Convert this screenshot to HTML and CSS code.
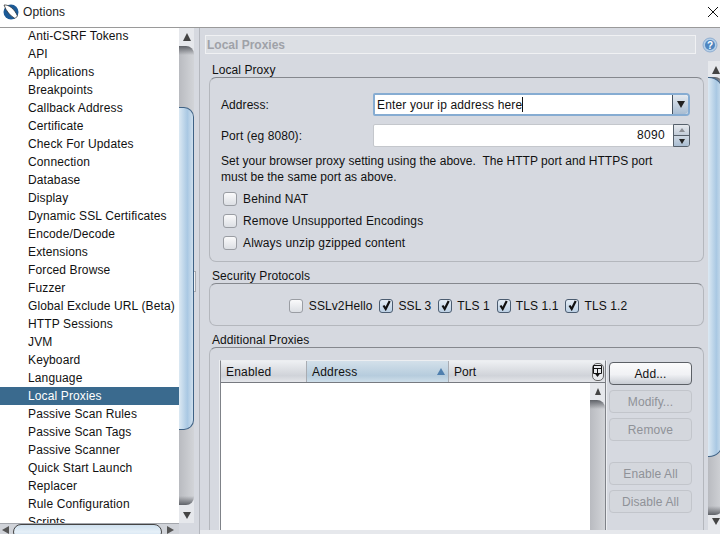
FILE: index.html
```html
<!DOCTYPE html>
<html lang="en">
<head>
<meta charset="utf-8">
<title>Options</title>
<link rel="stylesheet" href="styles.css">
</head>
<body>
<div class="window">
  <header class="titlebar">
    <svg class="logo" width="18" height="18" viewBox="0 0 18 18"><circle cx="9" cy="9" r="7.5" fill="#1c5a96"/><path d="M2 2C7 1.5 12.5 6 15.5 13 L13 15.5C8.5 13 4 8 2 2Z" fill="#fff" stroke="#222" stroke-width="0.7"/></svg>
    <span class="title">Options</span>
    <svg class="close" width="12" height="12" viewBox="0 0 12 12"><path d="M1 1L11 11M11 1L1 11" stroke="#111" stroke-width="1" fill="none"/></svg>
  </header>
  <main class="content">
    <nav class="tree">
      <div class="tree-main">
        <ul class="tree-list">
          <li>Anti-CSRF Tokens</li><li>API</li><li>Applications</li><li>Breakpoints</li><li>Callback Address</li><li>Certificate</li><li>Check For Updates</li><li>Connection</li><li>Database</li><li>Display</li><li>Dynamic SSL Certificates</li><li>Encode/Decode</li><li>Extensions</li><li>Forced Browse</li><li>Fuzzer</li><li>Global Exclude URL (Beta)</li><li>HTTP Sessions</li><li>JVM</li><li>Keyboard</li><li>Language</li><li class="selected">Local Proxies</li><li>Passive Scan Rules</li><li>Passive Scan Tags</li><li>Passive Scanner</li><li>Quick Start Launch</li><li>Replacer</li><li>Rule Configuration</li><li>Scripts</li>
        </ul>
        <div class="vscroll tree-vscroll">
          <span class="arrow up"></span>
          <div class="track"><div class="thumb tree-thumb"></div></div>
          <span class="arrow down"></span>
        </div>
      </div>
      <div class="hscroll-row">
        <div class="hscroll">
          <span class="arrow left"></span>
          <div class="htrack"><div class="hthumb"></div></div>
          <span class="arrow right"></span>
        </div>
      </div>
    </nav>
    <div class="divider"><span class="grip"></span></div>
    <section class="panel">
      <div class="panel-head">
        <div class="panel-title">Local Proxies</div>
        <svg class="help" width="16" height="16" viewBox="0 0 16 16"><circle cx="8" cy="8" r="7" fill="#b5cfe8" stroke="#8fadd0"/><circle cx="8" cy="8" r="5" fill="#4f86c0"/><text x="8" y="11.5" text-anchor="middle" class="help-q">?</text></svg>
      </div>
      <div class="panel-body">
        <div class="forms">
          <h2 class="group-label first">Local Proxy</h2>
          <div class="group proxy-group">
            <div class="form-row addr-row">
              <label class="form-label">Address:</label>
              <div class="combo"><span class="combo-text">Enter your ip address here</span><span class="combo-btn"><span class="arrow down dark"></span></span></div>
            </div>
            <div class="form-row port-row">
              <label class="form-label">Port (eg 8080):</label>
              <div class="spinner"><span class="spin-value">8090</span><span class="spin-btns"><span class="spin-btn"><span class="arrow up tiny grey"></span></span><span class="spin-btn"><span class="arrow down tiny dark"></span></span></span></div>
            </div>
            <p class="note">Set your browser proxy setting using the above.&nbsp; The HTTP port and HTTPS port<br>must be the same port as above.</p>
            <div class="checks">
              <label class="check"><span class="box"></span>Behind NAT</label>
              <label class="check"><span class="box"></span>Remove Unsupported Encodings</label>
              <label class="check"><span class="box"></span>Always unzip gzipped content</label>
            </div>
          </div>
          <h2 class="group-label">Security Protocols</h2>
          <div class="group protocols">
            <label class="check"><span class="box"></span>SSLv2Hello</label>
            <label class="check"><span class="box on"><svg width="11" height="11" viewBox="0 0 11 11"><path d="M2.5 5.5L4.7 9L8.7 1" stroke="#111" stroke-width="2.2" fill="none"/></svg></span>SSL 3</label>
            <label class="check"><span class="box on"><svg width="11" height="11" viewBox="0 0 11 11"><path d="M2.5 5.5L4.7 9L8.7 1" stroke="#111" stroke-width="2.2" fill="none"/></svg></span>TLS 1</label>
            <label class="check"><span class="box on"><svg width="11" height="11" viewBox="0 0 11 11"><path d="M2.5 5.5L4.7 9L8.7 1" stroke="#111" stroke-width="2.2" fill="none"/></svg></span>TLS 1.1</label>
            <label class="check"><span class="box on"><svg width="11" height="11" viewBox="0 0 11 11"><path d="M2.5 5.5L4.7 9L8.7 1" stroke="#111" stroke-width="2.2" fill="none"/></svg></span>TLS 1.2</label>
          </div>
          <h2 class="group-label">Additional Proxies</h2>
          <div class="group additional">
            <div class="table">
              <div class="thead">
                <div class="th th-enabled">Enabled</div>
                <div class="th th-address">Address<span class="sort"></span></div>
                <div class="th th-port">Port</div>
                <div class="th-cell"><div class="th-corner"><svg width="9" height="13" viewBox="0 0 9 13"><path d="M.5 .5H8.5V8.5H.5ZM.5 3.5H8.5M4.5 3.5V8.5" stroke="#111" fill="none"/><path d="M1.5 8H7.5L4.5 12Z" fill="#111"/></svg></div></div>
              </div>
              <div class="tbody">
                <div class="rows"></div>
                <div class="vscroll table-vscroll">
                  <span class="arrow up"></span>
                  <div class="track"></div>
                </div>
              </div>
            </div>
            <div class="buttons">
              <button class="btn primary">Add...</button>
              <button class="btn">Modify...</button>
              <button class="btn">Remove</button>
              <button class="btn spaced">Enable All</button>
              <button class="btn">Disable All</button>
            </div>
          </div>
        </div>
        <div class="vscroll main-vscroll">
          <span class="arrow up"></span>
          <div class="track"><div class="thumb main-thumb"></div></div>
          <span class="arrow down"></span>
        </div>
      </div>
      <div class="footer"></div>
    </section>
  </main>
</div>
</body>
</html>
```
FILE: styles.css
```css
* { box-sizing: border-box; }
html, body { margin: 0; padding: 0; }
body { width: 720px; height: 534px; overflow: hidden; font-family: "Liberation Sans", Arial, sans-serif; font-size: 12px; color: #111; background: #d6d9e0; }
.window { width: 720px; height: 534px; display: flex; flex-direction: column; overflow: hidden; }
.titlebar { height: 28px; flex: none; background: #fff; border-bottom: 1px solid #9a9a9a; display: flex; align-items: center; padding: 0 1px 4px 2px; }
.logo { flex: none; }
.title { margin-left: 3px; flex: 1; color: #222; letter-spacing: .1px; }
.close { flex: none; }
.content { flex: 1; min-height: 0; display: flex; overflow: hidden; }
.footer { height: 4px; flex: none; background: #e6e8ec; }
.tree { width: 194px; flex: none; display: flex; flex-direction: column; background: #d6d9e0; min-height: 0; }
.tree-main { flex: 1; min-height: 0; display: flex; }
.tree-list { list-style: none; margin: 0; padding: 0; flex: 1; overflow: hidden; background: #fff; }
.tree-list li { height: 18px; line-height: 18px; padding-left: 28px; letter-spacing: .13px; white-space: nowrap; }
.tree-list li:first-child { margin-top: -1px; }
.tree-list li.selected { background: #3a6a8e; color: #fff; }
.vscroll { display: flex; flex-direction: column; align-items: center; background: #e6e8ec; flex: none; }
.tree-vscroll { width: 15px; }
.track { flex: 1; width: 100%; position: relative; border-radius: 0 8px 8px 0; background: linear-gradient(#5f6268, rgba(95,98,104,0) 9px, rgba(95,98,104,0) calc(100% - 9px), #5f6268), linear-gradient(90deg, #b9bbc0, #d2d4d8); }
.table-vscroll .track { background: linear-gradient(#5f6268, rgba(95,98,104,0) 9px), linear-gradient(90deg, #b9bbc0, #d2d4d8); }
.thumb { position: absolute; left: 0; right: 0; border: 1px solid #3f6285; border-left: 0; background: linear-gradient(90deg, #dce9f3, #a9c8e3 60%, #cfe0ee); }
.tree-thumb { top: 61px; height: 323px; border-radius: 0 10px 10px 0; }
.main-thumb { top: 0; height: 380px; border-radius: 0 14px 14px 0; }
.arrow { display: block; width: 0; height: 0; border-style: solid; border-color: transparent; flex: none; }
.arrow.up { border-width: 0 4px 8px; border-bottom-color: #444; margin: 5px 0 5px; }
.arrow.down { border-width: 7px 4px 0; border-top-color: #444; margin: 7px 0 4px; }
.arrow.left { border-width: 4px 7px 4px 0; border-right-color: #555; margin-top: 2px; }
.arrow.right { border-width: 4px 0 4px 7px; border-left-color: #555; margin-top: 2px; }
.hscroll-row { height: 11px; flex: none; overflow: hidden; }
.hscroll { width: 179px; height: 11px; display: flex; align-items: flex-start; padding: 0 5px 0 2px; background: #d0d3d9; border-top: 1px solid #a4a7ad; }
.htrack { flex: 1; height: 10px; padding: 0 5px 0 4px; min-width: 0; }
.hthumb { height: 16px; border: 1px solid #444; border-radius: 8px; background: linear-gradient(#cfe0ee, #e6f0f8 50%, #bcd3e8); }
.divider { width: 5px; flex: none; background: #d6d9e0; display: flex; align-items: center; }
.grip { width: 2px; height: 21px; background: #eef0f3; border: 1px solid #a7aab0; border-left: 0; }
.panel { flex: 1; min-width: 0; display: flex; flex-direction: column; border-left: 1px solid #b4b7be; }
.panel-head { height: 33px; flex: none; display: flex; align-items: center; padding: 0 2px 0 5px; gap: 6px; }
.panel-title { width: 491px; height: 19px; border: 1px solid #f0f1f3; background: #dcdfe4; font-weight: bold; color: #9fa2a8; line-height: 18px; padding-left: 1px; }
.help { flex: none; }
.help-q { font: bold 10px "Liberation Sans", sans-serif; fill: #fff; }
.panel-body { flex: 1; min-height: 0; display: flex; }
.forms { flex: 1; min-width: 0; padding: 0 4px 0 9px; overflow: hidden; }
.main-vscroll { width: 15px; margin-right: -3px; }
.main-vscroll .arrow.up { margin: 5px 0 3px; }
.main-vscroll .arrow.down { margin: 3px 0 5px; }
.group-label { margin: 0; font-size: 12px; font-weight: normal; line-height: 14px; padding: 7px 0 0 3px; letter-spacing: .07px; color: #111; }
.group-label.first { padding: 3px 0 0 3px; line-height: 13px; }
.group { border: 1px solid #b4b7bd; border-top-color: #85888e; border-radius: 7px; background: #d6d9e0; }
.proxy-group { height: 185px; padding: 15px 13px 0 11px; }
.form-row { display: flex; align-items: center; }
.form-label { width: 152px; flex: none; letter-spacing: .07px; }
.combo { flex: 1; height: 23px; display: flex; background: #fff; border: 2px solid #86acd2; border-radius: 2px 4px 4px 2px; }
.combo-text { flex: 1; line-height: 19px; padding: 1px 0 0 2px; letter-spacing: .15px; }
.combo-text::after { content: ""; display: inline-block; width: 1px; height: 15px; background: #111; vertical-align: -3px; }
.combo-btn { width: 16px; display: flex; align-items: center; justify-content: center; background: linear-gradient(#e4e9ef, #a9bdd2); border-left: 1px solid #46525f; border-radius: 0 3px 3px 0; }
.arrow.dark { border-top-color: #222; }
.combo-btn .arrow.down { margin: 0; }
.port-row { margin-top: 8px; }
.spinner { flex: 1; height: 23px; display: flex; background: #fff; border: 1px solid #c4c7cc; border-radius: 2px 4px 4px 2px; }
.spin-value { flex: 1; text-align: right; padding-right: 9px; line-height: 21px; letter-spacing: .3px; }
.spin-btns { width: 17px; display: flex; flex-direction: column; border: 1px solid #56606b; margin: -1px; border-radius: 0 3px 3px 0; overflow: hidden; }
.spin-btn { flex: 1; display: flex; align-items: center; justify-content: center; background: linear-gradient(#e6e9ee, #c2ccd8); }
.spin-btn + .spin-btn { border-top: 1px solid #56606b; background: linear-gradient(#cfd8e2, #a9bdd2); }
.arrow.tiny.up { border-width: 0 3px 4px; margin: 0; }
.arrow.tiny.down { border-width: 5px 3px 0; margin: 0; }
.arrow.grey.up { border-bottom-color: #8b8e94; }
.note { margin: 6px 0 0; line-height: 16px; letter-spacing: .03px; color: #111; white-space: nowrap; }
.checks { display: flex; flex-direction: column; gap: 4px; margin-top: 5px; margin-left: 2px; }
.check { display: flex; align-items: center; height: 18px; gap: 5px; letter-spacing: .1px; }
.box { display: flex; align-items: center; justify-content: center; width: 14px; height: 14px; flex: none; border: 1px solid #9a9da3; border-radius: 3px; background: linear-gradient(#fafafb, #dcdfe4); }
.box.on { border-color: #4b5c70; background: linear-gradient(#e4ecf4, #bcd0e4); }
.checks .check { gap: 6px; letter-spacing: .15px; }
.protocols { height: 43px; display: flex; align-items: center; justify-content: center; gap: 7px; padding: 2px 0 0 3px; }
.protocols .check:first-child { gap: 6px; }
.additional { height: 220px; display: flex; padding: 12px 11px 0 10px; gap: 3px; }
.table { width: 386px; height: 210px; flex: none; background: #fff; border: 1px solid #7f8288; border-top-color: #eceef1; border-bottom: 0; display: flex; flex-direction: column; box-shadow: -1px 0 0 #eceef1, 1px 0 0 #eceef1; }
.thead { height: 22px; flex: none; display: flex; border-bottom: 1px solid #777a80; background: linear-gradient(#eef0f3, #d0d3d9 70%, #e4e6ea); }
.th { padding-left: 5px; border-right: 1px solid #a9acb2; display: flex; align-items: center; }
.th-enabled { width: 86px; letter-spacing: .2px; }
.th-address { width: 142px; letter-spacing: .2px; justify-content: space-between; padding-right: 3px; background: linear-gradient(#d3e0ea, #b6ccdd 70%, #cfdfea); }
.th-port { flex: 1; border-right: 0; }
.th-cell { width: 15px; flex: none; display: flex; justify-content: center; align-items: center; }
.th-corner { width: 12px; height: 18px; display: flex; justify-content: center; align-items: flex-start; border: 1px solid #666; border-radius: 5px; background: #e8eaee; padding-top: 1px; }
.sort { width: 0; height: 0; border-style: solid; border-width: 0 4px 7px; border-color: transparent transparent #4f7fae; }
.tbody { flex: 1; min-height: 0; display: flex; }
.rows { flex: 1; background: #fff; }
.table-vscroll { width: 15px; }
.table-vscroll .arrow.up { border-width: 0 3.5px 7px; margin: 5px 0; }
.buttons { flex: 1; display: flex; flex-direction: column; gap: 5px; padding-top: 2px; }
.btn { width: 83px; height: 23px; padding: 0; font: 12px "Liberation Sans", Arial, sans-serif; letter-spacing: .1px; color: #8f9298; border: 1px solid #c2c5cb; border-radius: 4px; background: #d4d7dd; }
.btn.primary { color: #111; border-color: #5c6066; background: linear-gradient(#fbfbfc, #f0f1f4 55%, #c8ccd3); }
.btn.spaced { margin-top: 16px; }
```
